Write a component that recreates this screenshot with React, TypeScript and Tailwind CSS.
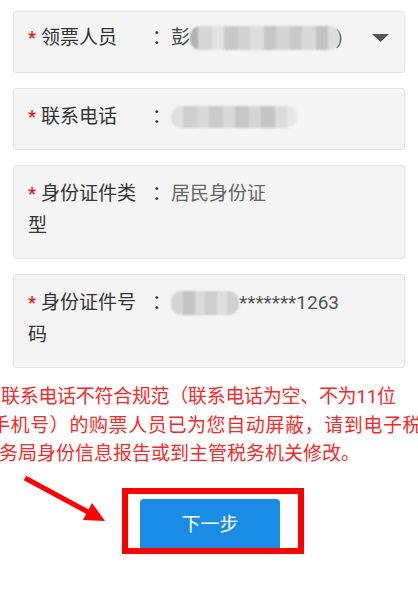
import React from 'react';

type Cell = { w: number; c: string };

const nameCells: Cell[] = [
  { w: 8, c: '#b0b0b0' }, { w: 14, c: '#d6d6d6' }, { w: 12, c: '#e2e2e2' }, { w: 14, c: '#c8c8c8' },
  { w: 12, c: '#d2d2d2' }, { w: 14, c: '#dcdcdc' }, { w: 12, c: '#c6c6c6' }, { w: 14, c: '#d4d4d4' },
  { w: 12, c: '#cacaca' }, { w: 14, c: '#d9d9d9' }, { w: 12, c: '#c2c2c2' }, { w: 12, c: '#dddddd' },
];

const phoneCells: Cell[] = [
  { w: 12, c: '#e0e0e0' }, { w: 14, c: '#cfcfcf' }, { w: 12, c: '#d8d8d8' }, { w: 14, c: '#cbcbcb' },
  { w: 12, c: '#d9d9d9' }, { w: 14, c: '#c7c7c7' }, { w: 12, c: '#d4d4d4' }, { w: 14, c: '#c4c4c4' },
  { w: 12, c: '#dbdbdb' }, { w: 10, c: '#e6e6e6' },
];

const idCells: Cell[] = [
  { w: 12, c: '#d4d4d4' }, { w: 12, c: '#c4c4c4' }, { w: 10, c: '#d9d9d9' }, { w: 12, c: '#cccccc' },
  { w: 10, c: '#dddddd' }, { w: 12, c: '#d0d0d0' },
];

function Mosaic({ cells, h = 22 }: { cells: Cell[]; h?: number }) {
  return (
    <span className="inline-flex overflow-hidden rounded-[10px] blur-[0.8px]" style={{ height: h }}>
      {cells.map((cell, i) => (
        <span key={i} className="block h-full" style={{ width: cell.w, backgroundColor: cell.c }} />
      ))}
    </span>
  );
}

function Field({
  label,
  children,
  select,
  top = 'pt-[12px] pb-[16px]',
}: {
  label: string;
  children: React.ReactNode;
  select?: boolean;
  top?: string;
}) {
  return (
    <div
      className={`mx-[13px] mb-[15px] flex items-start rounded-[3px] border border-[#e3e3e3] bg-[#f4f4f4] pl-[14px] pr-[14px] text-[19px] leading-[32px] ${top}`}
    >
      <div className="w-[124px] shrink-0 text-[#333]">
        <span className="inline-block w-[13px] text-[#ff0000]">*</span>
        {label}
      </div>
      <span className="shrink-0 text-[#333]">：</span>
      <div className="flex h-[32px] min-w-0 flex-1 items-center whitespace-nowrap text-[#666]">{children}</div>
      {select && (
        <svg width="17" height="8" viewBox="0 0 17 8" className="mt-[12px] mr-[1px] shrink-0">
          <path d="M0 0H17L8.5 8Z" fill="#555" />
        </svg>
      )}
    </div>
  );
}

export default function App() {
  return (
    <div className="relative h-[612px] w-[418px] overflow-hidden bg-white font-[Roboto,'Noto_Sans_CJK_SC',sans-serif]">
      <div className="pt-[11px]">
        <Field label="领票人员" select top="pt-[10px] pb-[18px]">
          <span className="text-[#444]">彭</span>
          <Mosaic cells={nameCells} h={24} />
          <span className="-ml-[4px] text-[#333]">)</span>
        </Field>
        <Field label="联系电话">
          <Mosaic cells={phoneCells} />
        </Field>
        <Field label="身份证件类型">居民身份证</Field>
        <Field label="身份证件号码">
          <Mosaic cells={idCells} h={24} />
          <span className="text-[#555]">*******1263</span>
        </Field>
      </div>

      <div className="mt-[1px] text-[19px] leading-[28.5px] text-[#f42a2a]">
        <div className="ml-[1px] whitespace-nowrap tracking-[-0.3px]">联系电话不符合规范（联系电话为空、不为11位</div>
        <div className="-ml-[9px] whitespace-nowrap tracking-[0.6px]">手机号）的购票人员已为您自动屏蔽，请到电子税</div>
        <div className="-ml-[1px] whitespace-nowrap">务局身份信息报告或到主管税务机关修改。</div>
      </div>

      <div className="mt-[19px] flex justify-center pl-[8px]">
        <div className="h-[66px] w-[182px] overflow-hidden border-[6px] border-[#ff0000] pt-[5px] pr-[18px] pl-[12px]">
          <button className="h-[64px] w-full rounded-[4px] bg-[#1a8ce6] pb-[10px] text-[19px] text-white">
            下一步
          </button>
        </div>
      </div>

      <svg
        width="90"
        height="56"
        viewBox="0 0 90 56"
        className="pointer-events-none absolute left-[20px] top-[470px]"
      >
        <line x1="5" y1="8" x2="68" y2="42" stroke="#ff0000" strokeWidth="5" />
        <polygon points="85,51 72,33 63,50" fill="#ff0000" />
      </svg>
    </div>
  );
}
